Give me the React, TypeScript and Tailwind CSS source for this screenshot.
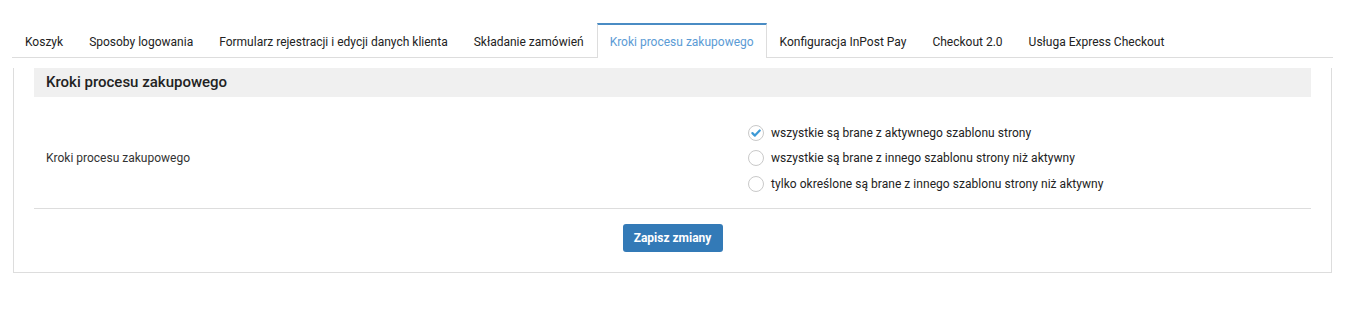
import React, { useState } from 'react';

const tabs = [
  'Koszyk',
  'Sposoby logowania',
  'Formularz rejestracji i edycji danych klienta',
  'Składanie zamówień',
  'Kroki procesu zakupowego',
  'Konfiguracja InPost Pay',
  'Checkout 2.0',
  'Usługa Express Checkout',
];

const options = [
  'wszystkie są brane z aktywnego szablonu strony',
  'wszystkie są brane z innego szablonu strony niż aktywny',
  'tylko określone są brane z innego szablonu strony niż aktywny',
];

const Radio: React.FC<{ checked: boolean }> = ({ checked }) => (
  <span className="w-4 h-4 rounded-full border border-[#c9c9c9] bg-white flex items-center justify-center flex-shrink-0">
    {checked && (
      <svg width="10" height="10" viewBox="0 0 10 10" fill="none">
        <path d="M1.4 5.1 L3.9 7.6 L8.7 2.5" stroke="#3d9ad6" strokeWidth="2.2" strokeLinecap="round" strokeLinejoin="round" />
      </svg>
    )}
  </span>
);

export default function App() {
  const [active, setActive] = useState(4);
  const [choice, setChoice] = useState(0);

  return (
    <div className="pt-[23px] pl-[12px] w-[1333px] font-['Roboto',sans-serif] text-[12px] text-[#333]">
      <div className="flex h-[35px] border-b border-[#ddd]">
        {tabs.map((t, i) => (
          <button
            key={t}
            onClick={() => setActive(i)}
            className={`h-[35px] -mb-px px-3 flex items-center border-x border-t-2 whitespace-nowrap ${
              i === active
                ? 'bg-white border-x-[#ddd] border-t-[#4a8cc4] text-[#5b9bd5]'
                : 'border-transparent text-[#222]'
            }`}
          >
            {t}
          </button>
        ))}
      </div>

      <div className="mt-[10px] mx-px border-x border-b border-[#ddd] px-5 pb-5">
        <div className="h-[29px] bg-[#f0f0f0] px-3 flex items-center text-[15px] font-medium text-[#222]">
          Kroki procesu zakupowego
        </div>

        <div className="mt-[23px] flex">
          <div className="w-[714px] px-3 flex items-center">Kroki procesu zakupowego</div>
          <div className="flex flex-col">
            {options.map((o, i) => (
              <label
                key={o}
                onClick={() => setChoice(i)}
                className="h-[25.5px] flex items-center gap-[7px] cursor-pointer text-[#222] tracking-[0.04px]"
              >
                <Radio checked={choice === i} />
                <span>{o}</span>
              </label>
            ))}
          </div>
        </div>

        <div className="mt-[11px] border-t border-[#ddd]" />

        <div className="mt-[15px] flex justify-center">
          <button className="w-[100px] h-[28px] rounded-[3px] bg-[#337ab7] text-white font-bold text-[12px]">
            Zapisz zmiany
          </button>
        </div>
      </div>
    </div>
  );
}
